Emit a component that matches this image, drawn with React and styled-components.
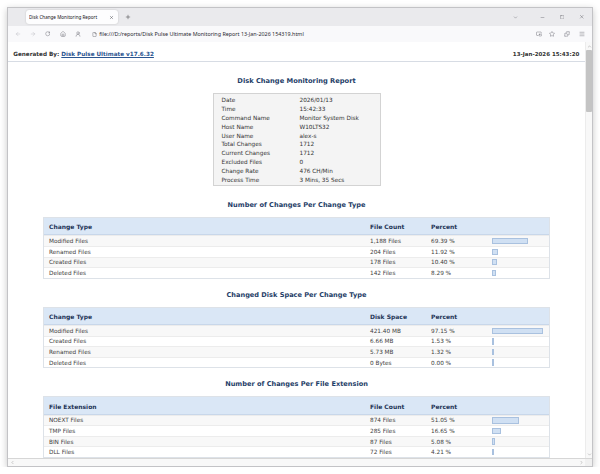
import React from 'react'
import styled, { createGlobalStyle } from 'styled-components'
import {
  ArrowLeft, ArrowRight, RotateCw, House, UserRound, File, Star, Puzzle, Menu,
  ChevronDown, ChevronUp, ChevronLeft, ChevronRight, Minus, Square, X, Plus, PictureInPicture2
} from 'lucide-react'

const GlobalStyle = createGlobalStyle`
  html, body {
    margin: 0;
    background: #ffffff;
  }
  body {
    font-family: "DejaVu Sans", Verdana, sans-serif;
  }
`

const info = [
  ['Date', '2026/01/13'],
  ['Time', '15:42:33'],
  ['Command Name', 'Monitor System Disk'],
  ['Host Name', 'W10LTS32'],
  ['User Name', 'alex-s'],
  ['Total Changes', '1712'],
  ['Current Changes', '1712'],
  ['Excluded Files', '0'],
  ['Change Rate', '476 CH/Min'],
  ['Process Time', '3 Mins, 35 Secs'],
]

const sections = [
  {
    title: 'Number of Changes Per Change Type',
    cols: ['Change Type', 'File Count', 'Percent'],
    rows: [
      ['Modified Files', '1,188 Files', 69.39],
      ['Renamed Files', '204 Files', 11.92],
      ['Created Files', '178 Files', 10.4],
      ['Deleted Files', '142 Files', 8.29],
    ],
  },
  {
    title: 'Changed Disk Space Per Change Type',
    cols: ['Change Type', 'Disk Space', 'Percent'],
    rows: [
      ['Modified Files', '421.40 MB', 97.15],
      ['Created Files', '6.66 MB', 1.53],
      ['Renamed Files', '5.73 MB', 1.32],
      ['Deleted Files', '0 Bytes', 0],
    ],
  },
  {
    title: 'Number of Changes Per File Extension',
    cols: ['File Extension', 'File Count', 'Percent'],
    rows: [
      ['NOEXT Files', '874 Files', 51.05],
      ['TMP Files', '285 Files', 16.65],
      ['BIN Files', '87 Files', 5.08],
      ['DLL Files', '72 Files', 4.21],
    ],
  },
]

function Report() {
  return (
    <Page>
      <ReportHeader>
        <GeneratedBy>
          Generated By: <ProductLink>Disk Pulse Ultimate v17.6.32</ProductLink>
        </GeneratedBy>
        <span>13-Jan-2026 15:43:20</span>
      </ReportHeader>

      <ReportTitle>Disk Change Monitoring Report</ReportTitle>

      <InfoBox>
        {info.map(([label, value]) => (
          <React.Fragment key={label}>
            <span>{label}</span>
            <span>{value}</span>
          </React.Fragment>
        ))}
      </InfoBox>

      {sections.map((section) => (
        <Section key={section.title}>
          <SectionTitle>{section.title}</SectionTitle>
          <Table>
            <HeadRow>
              {section.cols.map((c) => (
                <Cell key={c}>{c}</Cell>
              ))}
              <Cell />
            </HeadRow>
            {section.rows.map(([name, amount, pct], i) => (
              <Row key={name} $odd={i % 2 === 0}>
                <Cell>{name}</Cell>
                <Cell>{amount}</Cell>
                <Cell>{pct.toFixed(2)} %</Cell>
                <Cell>
                  <Bar style={{ width: Math.max(1, pct * 0.52) }} />
                </Cell>
              </Row>
            ))}
          </Table>
        </Section>
      ))}
    </Page>
  )
}

export default function App() {
  return (
    <>
      <GlobalStyle />
      <Desktop>
        <Window>
          <TabStrip>
            <Tab>
              <TabTitle>Disk Change Monitoring Report</TabTitle>
              <X size={5} strokeWidth={1.6} />
            </Tab>
            <NewTab>
              <Plus size={6} strokeWidth={1.6} />
            </NewTab>
            <WindowControls>
              <ControlButton $width={34}>
                <ChevronDown size={5} strokeWidth={1.5} />
              </ControlButton>
              <ControlButton $width={20}>
                <Minus size={5} strokeWidth={1.5} />
              </ControlButton>
              <ControlButton $width={20}>
                <Square size={4.5} strokeWidth={1.5} />
              </ControlButton>
              <ControlButton $width={20}>
                <X size={5.5} strokeWidth={1.5} />
              </ControlButton>
            </WindowControls>
          </TabStrip>

          <Toolbar>
            <NavButton $dim>
              <ArrowLeft size={6} strokeWidth={1.6} />
            </NavButton>
            <NavButton $dim>
              <ArrowRight size={6} strokeWidth={1.6} />
            </NavButton>
            <NavButton>
              <RotateCw size={5.5} strokeWidth={1.7} />
            </NavButton>
            <NavButton>
              <House size={6} strokeWidth={1.6} />
            </NavButton>
            <NavButton>
              <UserRound size={6} strokeWidth={1.6} />
            </NavButton>
            <UrlBar>
              <File size={5} strokeWidth={1.7} />
              <UrlText>file:///D:/reports/Disk Pulse Ultimate Monitoring Report 13-Jan-2026 154319.html</UrlText>
            </UrlBar>
            <ToolIcon $width={12.4}>
              <PictureInPicture2 size={6} strokeWidth={1.6} />
            </ToolIcon>
            <ToolIcon $width={12.4}>
              <Star size={6} strokeWidth={1.6} />
            </ToolIcon>
            <ToolIcon $width={17}>
              <Puzzle size={6} strokeWidth={1.6} />
            </ToolIcon>
            <ToolIcon $width={14}>
              <Menu size={6} strokeWidth={1.6} />
            </ToolIcon>
            <Spacer />
          </Toolbar>

          <Viewport>
            <Report />
            <VScroll>
              <ScrollArrow>
                <ChevronUp size={5} strokeWidth={2} />
              </ScrollArrow>
              <Thumb />
              <ScrollArrow $end>
                <ChevronDown size={5} strokeWidth={2} />
              </ScrollArrow>
            </VScroll>
            <HScroll>
              <ChevronLeft size={5} strokeWidth={2} />
              <ChevronRight size={5} strokeWidth={2} />
            </HScroll>
            <Corner />
          </Viewport>
        </Window>
      </Desktop>
    </>
  )
}

const Desktop = styled.div`
  padding: 7px 0 0 7px;
`

const Window = styled.div`
  width: 586px;
  height: 460px;
  box-sizing: border-box;
  border: 1px solid #c3c3c6;
  box-shadow: 0 2px 7px rgba(0, 0, 0, 0.22);
  display: flex;
  flex-direction: column;
  overflow: hidden;
  background: #ffffff;
`

const TabStrip = styled.div`
  height: 18px;
  flex: none;
  display: flex;
  align-items: center;
  padding-left: 18px;
  background: #eaeaed;
  color: #15141a;
`

const Tab = styled.div`
  width: 92px;
  height: 14px;
  box-sizing: border-box;
  display: flex;
  align-items: center;
  padding: 0 4px 0 3px;
  background: #fdfdfe;
  border-radius: 3px;
  box-shadow: 0 0 2px rgba(0, 0, 0, 0.18);
  color: #15141a;
`

const TabTitle = styled.span`
  flex: 1;
  font-family: "Noto Sans", "Liberation Sans", sans-serif;
  font-size: 4.6px;
  white-space: nowrap;
  overflow: hidden;
`

const NewTab = styled.div`
  display: flex;
  margin-left: 7px;
`

const WindowControls = styled.div`
  margin-left: auto;
  display: flex;
  align-items: center;
  height: 100%;
`

const ControlButton = styled.div`
  width: ${(p) => p.$width}px;
  display: flex;
  justify-content: center;
  color: #3b3b44;
`

const Toolbar = styled.div`
  height: 16px;
  flex: none;
  display: flex;
  align-items: center;
  padding-left: 2px;
  background: #f9f9fb;
  color: #5b5b66;
`

const NavButton = styled.div`
  width: 15px;
  display: flex;
  justify-content: center;
  color: ${(p) => (p.$dim ? '#b4b4bb' : '#5b5b66')};
`

const UrlBar = styled.div`
  flex: 1;
  display: flex;
  align-items: center;
  gap: 2.5px;
  margin-left: 6.8px;
  min-width: 0;
  color: #3b3b44;
`

const UrlText = styled.span`
  font-family: "Noto Sans", "Liberation Sans", sans-serif;
  font-size: 5.4px;
  color: #2b2a33;
  white-space: nowrap;
`

const ToolIcon = styled.div`
  width: ${(p) => p.$width}px;
  display: flex;
  justify-content: center;
`

const Spacer = styled.div`
  width: 3px;
`

const Viewport = styled.div`
  flex: 1;
  min-height: 0;
  display: grid;
  grid-template-columns: 1fr 7px;
  grid-template-rows: 1fr 8px;
`

const Page = styled.div`
  display: flex;
  flex-direction: column;
  overflow: hidden;
  background: #ffffff;
  color: #3a3a3a;
`

const ReportHeader = styled.div`
  height: 20px;
  flex: none;
  box-sizing: border-box;
  display: flex;
  justify-content: space-between;
  align-items: flex-end;
  padding: 0 5.7px 4.5px 5.3px;
  border-bottom: 1px solid #d7dce4;
  font-size: 5.5px;
  font-weight: bold;
  color: #333333;
`

const GeneratedBy = styled.span`
  font-size: 5.7px;
`

const ProductLink = styled.span`
  color: #2a5590;
  text-decoration: underline;
`

const ReportTitle = styled.h1`
  margin: 13.5px 0 7.2px;
  text-align: center;
  font-size: 6.7px;
  line-height: 10px;
  color: #1f3e68;
`

const InfoBox = styled.div`
  width: 168px;
  flex: none;
  box-sizing: border-box;
  margin: 0 auto 2.8px;
  padding: 2px 8px 0;
  display: grid;
  grid-template-columns: 78px 1fr;
  background: #f4f4f4;
  border: 1px solid #d3d3d3;
  font-size: 5.75px;
  line-height: 8.95px;
  color: #333333;
  white-space: nowrap;
`

const Section = styled.section`
  flex: none;
  display: flow-root;
`

const SectionTitle = styled.h2`
  margin: 11px 0 7px;
  text-align: center;
  font-size: 6.6px;
  line-height: 10px;
  color: #1f3e68;
`

const Table = styled.div`
  margin: 0 35px 0 35.3px;
  border: 1px solid #dde2e8;
  background: #ffffff;
`

const gridCols = `
  display: grid;
  grid-template-columns: 321px 61px 61px 1fr;
  align-items: center;
  box-sizing: border-box;
`

const HeadRow = styled.div`
  ${gridCols}
  height: 17.3px;
  padding-top: 1px;
  background: #dae7f6;
  border-bottom: 1px solid #c8d7ea;
  font-size: 6px;
  font-weight: bold;
  color: #1e3557;
`

const Row = styled.div`
  ${gridCols}
  height: 10.6px;
  background: ${(p) => (p.$odd ? '#f8f8f8' : '#ffffff')};
  border-top: 1px solid #ececec;
  font-size: 5.75px;
  color: #3d3d3d;
`

const Cell = styled.div`
  padding-left: 4.7px;
  white-space: nowrap;
  display: flex;
  align-items: center;
`

const Bar = styled.div`
  height: 6.4px;
  box-sizing: border-box;
  background: #d0e0f3;
  border: 1px solid #a9c1df;
`

const VScroll = styled.div`
  display: flex;
  flex-direction: column;
  align-items: center;
  background: #f8f8f8;
  border-left: 1px solid #ececec;
  color: #8a8a8a;
`

const ScrollArrow = styled.div`
  height: 8px;
  display: flex;
  align-items: center;
  margin-top: ${(p) => (p.$end ? 'auto' : '0')};
`

const Thumb = styled.div`
  width: 5.5px;
  height: 62px;
  background: #c4c4c4;
  border-radius: 1px;
`

const HScroll = styled.div`
  display: flex;
  justify-content: space-between;
  align-items: center;
  padding: 0 1px 0 2px;
  background: #f8f8f8;
  border-top: 1px solid #d6d6d6;
  color: #8a8a8a;
`

const Corner = styled.div`
  background: #f0f0f0;
  border-top: 1px solid #d6d6d6;
`
